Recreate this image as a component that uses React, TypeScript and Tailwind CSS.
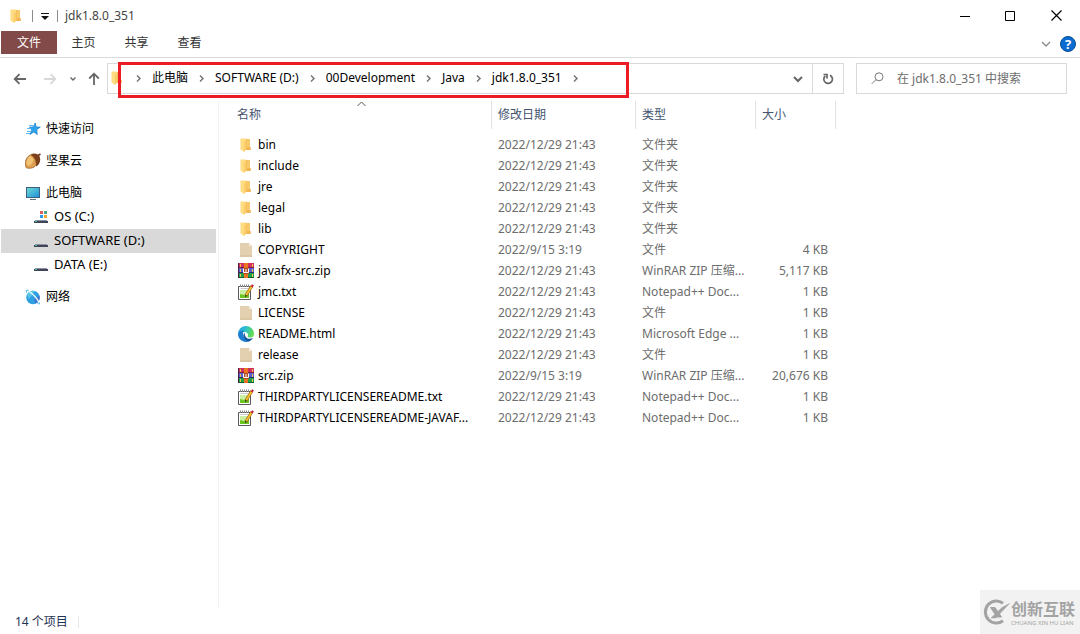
import { Fragment, useState, type ReactNode } from 'react';
import clsx from 'clsx';

type FileKind = 'folder' | 'blank' | 'rar' | 'notepad' | 'edge';

interface FileRow {
  name: string;
  kind: FileKind;
  date: string;
  type: string;
  size?: string;
}

const files: FileRow[] = [
  { name: 'bin', kind: 'folder', date: '2022/12/29 21:43', type: '文件夹' },
  { name: 'include', kind: 'folder', date: '2022/12/29 21:43', type: '文件夹' },
  { name: 'jre', kind: 'folder', date: '2022/12/29 21:43', type: '文件夹' },
  { name: 'legal', kind: 'folder', date: '2022/12/29 21:43', type: '文件夹' },
  { name: 'lib', kind: 'folder', date: '2022/12/29 21:43', type: '文件夹' },
  { name: 'COPYRIGHT', kind: 'blank', date: '2022/9/15 3:19', type: '文件', size: '4 KB' },
  { name: 'javafx-src.zip', kind: 'rar', date: '2022/12/29 21:43', type: 'WinRAR ZIP 压缩...', size: '5,117 KB' },
  { name: 'jmc.txt', kind: 'notepad', date: '2022/12/29 21:43', type: 'Notepad++ Doc...', size: '1 KB' },
  { name: 'LICENSE', kind: 'blank', date: '2022/12/29 21:43', type: '文件', size: '1 KB' },
  { name: 'README.html', kind: 'edge', date: '2022/12/29 21:43', type: 'Microsoft Edge ...', size: '1 KB' },
  { name: 'release', kind: 'blank', date: '2022/12/29 21:43', type: '文件', size: '1 KB' },
  { name: 'src.zip', kind: 'rar', date: '2022/9/15 3:19', type: 'WinRAR ZIP 压缩...', size: '20,676 KB' },
  { name: 'THIRDPARTYLICENSEREADME.txt', kind: 'notepad', date: '2022/12/29 21:43', type: 'Notepad++ Doc...', size: '1 KB' },
  { name: 'THIRDPARTYLICENSEREADME-JAVAF...', kind: 'notepad', date: '2022/12/29 21:43', type: 'Notepad++ Doc...', size: '1 KB' },
];

const crumbs = ['此电脑', 'SOFTWARE (D:)', '00Development', 'Java', 'jdk1.8.0_351'];

function FolderIcon() {
  return (
    <svg width="16" height="16" viewBox="0 0 16 16" className="shrink-0" aria-hidden="true">
      <path d="M6 2h6v8h.8v3H6z" fill="#f3b654" />
      <path d="M9 2h3v8H9z" fill="#f8c86a" />
      <path d="M2.500 1.500H8V12l-2 3-3.500-2.500z" fill="#ffdc82" />
      <path d="M6 5l2.500-2v9L6 15z" fill="#fbcd69" />
    </svg>
  );
}

function BlankFileIcon() {
  return (
    <svg width="16" height="16" viewBox="0 0 16 16" className="shrink-0" aria-hidden="true">
      <path d="M2 1h9l3 3v11H2z" fill="#e2d0b0" />
      <path d="M11 1l3 3h-3z" fill="#f6eddc" />
      <path d="M2 13h12v2H2z" fill="#dbc7a4" />
    </svg>
  );
}

function RarIcon() {
  return (
    <svg width="16" height="16" viewBox="0 0 16 16" className="shrink-0" aria-hidden="true">
      <rect width="16" height="5" fill="#d0305f" />
      <rect y="4" width="16" height="1" fill="#7d1c3c" />
      <rect y="5" width="16" height="5" fill="#5a5fd2" />
      <rect y="9" width="16" height="1" fill="#23286b" />
      <rect y="10" width="16" height="5" fill="#1fa04a" />
      <rect y="14" width="16" height="1" fill="#0d5c2c" />
      <path d="M.5 0v15" stroke="#4b2340" />
      <path d="M2.500 1v3M2.500 6v3M2.500 11v3M14.500 1v3M14.500 6v3M14.500 11v3" stroke="#f4c04a" />
      <rect x="6" width="4" height="15" fill="#ea7420" />
      <rect x="5" y="5" width="6" height="6" fill="#b04c24" />
      <path d="M5.500 5.500v4h5v-4M8 6v3" stroke="#fff" fill="none" />
    </svg>
  );
}

function NotepadIcon() {
  return (
    <svg width="16" height="16" viewBox="0 0 16 16" className="shrink-0" aria-hidden="true">
      <path d="M.5 2.500h12v13H.5z" fill="#fff" stroke="#5a5a5a" />
      <path d="M2.500 3V.5M4.500 3V.5M6.500 3V.5M8.500 3V.5M10.500 3V.5" stroke="#8b8b8b" />
      <path d="M2.500 4.500h8" stroke="#c9c9c9" />
      <path d="M2 6h9v8H2z" fill="#c9efa2" />
      <path d="M2 10l4 1 5-3v6H2z" fill="#6cc51f" />
      <path d="M13.800 2 8 11.500" stroke="#8a5a14" strokeWidth="3" />
      <path d="M13.600 2.400 8.300 11" stroke="#f6bc2c" strokeWidth="2" />
      <path d="M12.800 2.400 14 .3l1.800 1L14.800 3.400z" fill="#c2203c" />
      <path d="M7 13.200l.3-2.300 1.600 1z" fill="#222" />
    </svg>
  );
}

function EdgeIcon() {
  return (
    <svg width="16" height="16" viewBox="0 0 16 16" className="shrink-0" aria-hidden="true">
      <defs>
        <linearGradient id="edgeTop" x1="0" y1="0" x2="1" y2="0.3">
          <stop offset="0" stopColor="#1f9fe0" />
          <stop offset="0.5" stopColor="#2bc0cf" />
          <stop offset="1" stopColor="#5fdb55" />
        </linearGradient>
      </defs>
      <path d="M0 8a8 8 0 0 1 16 0c0 2.300-1.600 3.600-3.700 3.600-1.800 0-2.900-.6-2.600-1.300.7-.8.6-1.800.1-2.500C8.500 5.500 3 4.600 0 8z" fill="url(#edgeTop)" />
      <path d="M0 8c.8-3 4-4 6.500-3.300C3.800 6 4.500 13 10 15.700A8 8 0 0 1 0 8z" fill="#1b7cd0" />
      <path d="M6.700 6.500C4 9 5.600 14 10.200 15.700c2-.5 3.800-2 4.600-3.700-3.800 1.800-8.400.6-8.100-5.500z" fill="#12559f" />
    </svg>
  );
}

function FileIcon({ kind }: { kind: FileKind }) {
  if (kind === 'folder') return <FolderIcon />;
  if (kind === 'blank') return <BlankFileIcon />;
  if (kind === 'rar') return <RarIcon />;
  if (kind === 'notepad') return <NotepadIcon />;
  return <EdgeIcon />;
}

function StarIcon() {
  return (
    <svg width="16" height="16" viewBox="0 0 16 16" aria-hidden="true">
      <path d="M10.300 2l.8 4 4.200.1-3.600 2.700.6 4.700-3.500-2.500L5 13.500l1.800-4.300L4.500 6.200l3.700-.3z" fill="#2fa4ee" stroke="#1578c4" strokeWidth=".7" />
      <path d="M4 4.500h4M2 7.500h4M2 10.500h4M1 12.500h4" stroke="#56b9f4" />
    </svg>
  );
}

function NutIcon() {
  return (
    <svg width="16" height="16" viewBox="0 0 16 16" aria-hidden="true">
      <path d="M6 1C9 0 12.500.3 14.300 3c2 3.500.5 8-2.800 10.500z" fill="#7b3f1c" />
      <path d="M13 2.500 15.500 1" stroke="#6a3416" strokeWidth="1.500" />
      <path d="M5.500 1.800C2 3.500 0 7.500.4 11c0 2 .4 3.500 1.300 3.900 3.300.8 7.300.3 9.300-2.700C11.800 8.500 9.500 3.500 5.500 1.800z" fill="#dfa050" stroke="#8d5421" strokeWidth=".7" />
      <path d="M5 3C2.500 5 1.500 8 1.500 10.500L3.500 13c2.500-1 4.500-3.500 5-6.500C7.800 4.800 6.500 3.800 5 3z" fill="#f0c377" />
    </svg>
  );
}

function MonitorIcon() {
  return (
    <svg width="16" height="16" viewBox="0 0 16 16" aria-hidden="true">
      <defs>
        <linearGradient id="screen" x1="0" y1="0" x2="1" y2="1">
          <stop offset="0" stopColor="#6fdcd2" />
          <stop offset="1" stopColor="#1e8edb" />
        </linearGradient>
      </defs>
      <rect x="1.500" y="2.500" width="13" height="10" fill="url(#screen)" stroke="#3f5f7c" />
      <path d="M5 14.500h6" stroke="#64707c" />
    </svg>
  );
}

function DriveIcon({ system }: { system?: boolean }) {
  return (
    <svg width="16" height="16" viewBox="0 0 16 16" aria-hidden="true">
      {system && (
        <>
          <path d="M7 2h3v3H7z" fill="#d9605a" />
          <path d="M11 2h3v3h-3z" fill="#4fa586" />
          <path d="M7 6h3v3H7z" fill="#2d9be6" />
          <path d="M11 6h3v3h-3z" fill="#f5a728" />
        </>
      )}
      <path d="M2 11h12v1H2z" fill="#8b90a2" />
      <path d="M1 12h14v2H1z" fill="#3f4459" />
      <path d="M2 12h2v1H2z" fill="#37c486" />
    </svg>
  );
}

function NetworkIcon() {
  return (
    <svg width="16" height="16" viewBox="0 0 16 16" aria-hidden="true">
      <circle cx="8" cy="8.500" r="6.800" fill="#2e9fe0" />
      <path d="M2 5.500a7 7 0 0 1 8-3.500L4 10z" fill="#5ac6e6" />
      <path d="M10.500 14.500a7 7 0 0 0 4-8L9 10z" fill="#3f74d0" />
      <path d="M1.500 1.500C5 2 13 9 14.500 15" stroke="#e3f8fd" fill="none" strokeWidth="1.300" />
      <path d="M1.500 3.500C.5 1 2 .8 3.500 1.500M12.500 14.500c1.500.8 2.500.5 2-1" stroke="#3bb0e4" fill="none" />
    </svg>
  );
}

function Chevron() {
  return (
    <svg width="9" height="9" viewBox="0 0 9 9" className="shrink-0 text-[#777]" fill="none" stroke="currentColor" strokeWidth="1.500" aria-hidden="true">
      <path d="M3 1.500l3 3-3 3" />
    </svg>
  );
}

function ChevronDown({ bold }: { bold?: boolean }) {
  return (
    <svg width="10" height="10" viewBox="0 0 10 10" fill="none" stroke="currentColor" strokeWidth={bold ? 2 : 1.300} aria-hidden="true">
      <path d="M1 3l4 4 4-4" />
    </svg>
  );
}

function ArrowIcon({ className }: { className?: string }) {
  return (
    <svg width="14" height="14" viewBox="0 0 14 14" className={className} fill="none" stroke="currentColor" strokeWidth="1.800" aria-hidden="true">
      <path d="M13 7H2M6.500 2.200 1.700 7l4.800 4.800" />
    </svg>
  );
}

function TitleBar() {
  return (
    <header className="flex h-[31px] shrink-0 items-center pl-2">
      <FolderIcon />
      <span className="ml-2 h-3 w-px bg-[#8c8c8c]" />
      <button aria-label="自定义快速访问工具栏" className="ml-1 flex h-5 w-4 items-center justify-center">
        <svg width="8" height="8" viewBox="0 0 8 8" aria-hidden="true">
          <path d="M0 1h8v1H0zM0 4h8L4 8z" fill="#111" />
        </svg>
      </button>
      <span className="ml-1 h-3 w-px bg-[#8c8c8c]" />
      <h1 className="ml-[7px] text-[#444]">jdk1.8.0_351</h1>
      <div className="ml-auto flex h-full text-black">
        <button aria-label="最小化" className="flex w-[45px] items-center justify-center">
          <svg width="10" height="10" viewBox="0 0 10 10"><path d="M0 5.500h10" stroke="currentColor" /></svg>
        </button>
        <button aria-label="最大化" className="flex w-[45px] items-center justify-center">
          <svg width="10" height="10" viewBox="0 0 10 10"><path d="M.5.5h9v9h-9z" fill="none" stroke="currentColor" /></svg>
        </button>
        <button aria-label="关闭" className="flex w-12 items-center justify-center">
          <svg width="11" height="11" viewBox="0 0 11 11"><path d="M.5.5l10 10M10.500.5l-10 10" stroke="currentColor" strokeWidth="1.200" /></svg>
        </button>
      </div>
    </header>
  );
}

function RibbonTabs() {
  return (
    <div className="flex h-[27px] shrink-0 items-start border-b border-[#dadbdc] pl-px">
      <button className="h-[23px] w-14 bg-[#824a48] text-white">文件</button>
      <button className="h-6 w-[53px] text-[#333]">主页</button>
      <button className="h-6 w-[53px] text-[#333]">共享</button>
      <button className="h-6 w-[53px] text-[#333]">查看</button>
      <div className="ml-auto flex h-[26px] items-center gap-[9px] pr-1 text-[#8c8c8c]">
        <button aria-label="展开功能区">
          <ChevronDown />
        </button>
        <button
          aria-label="帮助"
          className="h-4 w-4 rounded-full border border-[#0a4d94] bg-[#0a6bd0] text-center text-[13px] leading-[14px] font-bold text-white"
        >
          ?
        </button>
      </div>
    </div>
  );
}

function AddressBar() {
  const [query, setQuery] = useState('');

  return (
    <div className="flex h-[43px] shrink-0 items-start pt-[5px] pr-[13px]">
      <div className="flex h-[31px] w-[107px] shrink-0 items-center pl-[13px] text-[#666]">
        <button aria-label="后退"><ArrowIcon /></button>
        <button aria-label="前进" className="ml-4 text-[#d8d8d8]"><ArrowIcon className="rotate-180" /></button>
        <button aria-label="最近位置" className="ml-3">
          <svg width="8" height="8" viewBox="0 0 8 8" fill="none" stroke="currentColor" strokeWidth="1.400"><path d="M1.500 2.500 4 5l2.500-2.500" /></svg>
        </button>
        <button aria-label="上移" className="ml-[10px]"><ArrowIcon className="rotate-90" /></button>
      </div>

      <div className="flex h-[31px] min-w-0 flex-1 border border-[#d9d9d9]">
        <nav aria-label="地址" className="relative flex flex-1 items-center gap-[9px] pb-px pl-px text-black">
          <FolderIcon />
          <Chevron />
          {crumbs.map((crumb) => (
            <Fragment key={crumb}>
              <button className="whitespace-nowrap">{crumb}</button>
              <Chevron />
            </Fragment>
          ))}
          {/* highlight round the path */}
          <div className="pointer-events-none absolute -top-[2px] left-[10px] h-9 w-[511px] border-3 border-[#ed1c24]" />
        </nav>
        <button aria-label="历史记录" className="flex w-7 items-center justify-center text-[#666]">
          <ChevronDown bold />
        </button>
        <button aria-label="刷新" className="flex w-[31px] items-center justify-center border-l border-[#d9d9d9] text-[#666]">
          <svg width="12" height="12" viewBox="0 0 12 12" fill="none" stroke="currentColor" strokeWidth="1.700">
            <path d="M8 2.300A4.300 4.300 0 1 1 3.200 3" />
            <path d="M1.500 1.500H5V5.500" />
          </svg>
        </button>
      </div>

      <label className="ml-3 flex h-[31px] w-[211px] shrink-0 items-center border border-[#d9d9d9] pl-[14px]">
        <svg width="13" height="13" viewBox="0 0 13 13" className="shrink-0" fill="none" stroke="#777" aria-hidden="true">
          <circle cx="8" cy="4.800" r="4" />
          <path d="M5 7.600.8 11.800" />
        </svg>
        <input
          type="search"
          aria-label="搜索"
          value={query}
          onChange={(e) => setQuery(e.target.value)}
          placeholder="在 jdk1.8.0_351 中搜索"
          className="ml-[13px] w-full min-w-0 outline-none placeholder:text-[#6d6d6d]"
        />
      </label>
    </div>
  );
}

interface SideItemProps {
  icon: ReactNode;
  label: string;
  nested?: boolean;
  active?: boolean;
}

function SideItem({ icon, label, nested, active }: SideItemProps) {
  return (
    <button
      className={clsx(
        'flex h-6 w-full items-center gap-[5px] text-left text-black',
        nested ? 'pl-8 text-[13px]' : 'pl-6',
        active && 'bg-[#d9d9d9]',
      )}
    >
      {icon}
      {label}
    </button>
  );
}

function Sidebar() {
  return (
    <aside className="flex w-[219px] shrink-0 flex-col gap-2 border-r border-[#f3f3f3] pt-4 pr-[2px] pl-px">
      <SideItem icon={<StarIcon />} label="快速访问" />
      <SideItem icon={<NutIcon />} label="坚果云" />
      <div>
        <SideItem icon={<MonitorIcon />} label="此电脑" />
        <SideItem icon={<DriveIcon system />} label="OS (C:)" nested />
        <SideItem icon={<DriveIcon />} label="SOFTWARE (D:)" nested active />
        <SideItem icon={<DriveIcon />} label="DATA (E:)" nested />
      </div>
      <SideItem icon={<NetworkIcon />} label="网络" />
    </aside>
  );
}

function ColumnHeader({ label, first }: { label: string; first?: boolean }) {
  return (
    <th scope="col" className="h-[33px] p-0 align-top font-normal">
      <div className={clsx('relative flex h-7 items-center border-r border-[#e2e2e2] text-[#44546f]', first ? 'pl-[18px]' : 'pl-[6px]')}>
        {label}
        {first && (
          <svg width="9" height="6" viewBox="0 0 9 6" className="absolute top-0 left-[138px]" fill="none" stroke="#555" aria-label="升序">
            <path d="M.5 5l4-4 4 4" />
          </svg>
        )}
      </div>
    </th>
  );
}

function FileTable() {
  return (
    <table className="w-[617px] table-fixed border-collapse self-start text-left">
      <colgroup>
        <col className="w-[273px]" />
        <col className="w-[144px]" />
        <col className="w-[120px]" />
        <col className="w-[80px]" />
      </colgroup>
      <thead>
        <tr>
          <ColumnHeader label="名称" first />
          <ColumnHeader label="修改日期" />
          <ColumnHeader label="类型" />
          <ColumnHeader label="大小" />
        </tr>
      </thead>
      <tbody className="text-[#6d6d6d]">
        {files.map((file) => (
          <tr key={file.name} className="h-[21px] whitespace-nowrap">
            <td className="p-0 pl-[19px]">
              <div className="flex items-center gap-1 text-black">
                <FileIcon kind={file.kind} />
                {file.name}
              </div>
            </td>
            <td className="p-0 pl-[6px]">{file.date}</td>
            <td className="p-0 pl-[6px]">{file.type}</td>
            <td className="p-0 pr-2 text-right">{file.size}</td>
          </tr>
        ))}
      </tbody>
    </table>
  );
}

function Watermark() {
  return (
    <div className="absolute right-0 bottom-0 flex h-11 w-[100px] items-center gap-px bg-[#f2f2f2] pl-[3px] text-[#a3a3a3]">
      <svg width="27" height="26" viewBox="0 0 27 26" className="shrink-0" fill="none" stroke="currentColor" aria-hidden="true">
        <path d="M20 4.200A11 11 0 1 0 20 21.800" strokeWidth="3" />
        <path d="M7.500 8.500h4.500l6.500 9.500H14z" fill="currentColor" />
        <path d="M8 19 19 8.500l7.500-4-9 9.500-4.500 5z" fill="currentColor" strokeWidth=".5" />
      </svg>
      <div className="pt-px whitespace-nowrap">
        <p className="text-[16px] leading-5 font-bold">创新互联</p>
        <p className="text-[6px] leading-2">CHUANG XIN HU LIAN</p>
      </div>
    </div>
  );
}

export default function App() {
  return (
    <div className="relative flex h-screen flex-col overflow-hidden bg-white font-['Noto_Sans','Noto_Sans_CJK_SC',sans-serif] text-xs">
      <TitleBar />
      <RibbonTabs />
      <AddressBar />
      <main className="flex min-h-0 flex-1">
        <Sidebar />
        <FileTable />
      </main>
      <footer className="flex h-[25px] shrink-0 items-center pl-[15px] text-[#1f3354]">
        <span>14 个项目</span>
        <span className="ml-[10px] h-3 w-px bg-[#e8e8e8]" />
      </footer>
      <Watermark />
    </div>
  );
}
